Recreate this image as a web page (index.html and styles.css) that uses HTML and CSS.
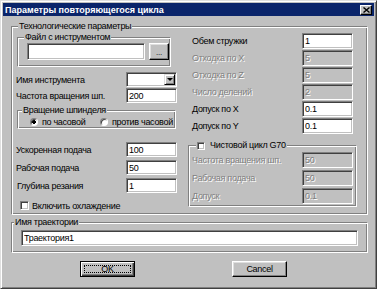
FILE: index.html
```html
<!DOCTYPE html>
<html lang="ru">
<head>
    <meta charset="UTF-8">
    <title>Параметры повторяющегося цикла</title>
    <link rel="stylesheet" href="styles.css">
</head>
<body>
    <div class="window">
        <div class="titlebar">
            <span class="title">Параметры повторяющегося цикла</span>
            <button class="close-btn" type="button">
                <svg width="7" height="6" viewBox="0 0 7 6"><path d="M0.5 0.5 L6.5 5.5 M6.5 0.5 L0.5 5.5" stroke="#000" stroke-width="1.4"/></svg>
            </button>
        </div>

        <div class="dialog-body">
            <fieldset class="group group-main">
                <legend>Технологические параметры</legend>
                <div class="cols">
                    <div class="col-left">
                        <fieldset class="group group-file">
                            <legend>Файл с инструментом</legend>
                            <div class="file-row">
                                <input class="edit file-edit" type="text" value="">
                                <button class="btn btn-browse" type="button">...</button>
                            </div>
                        </fieldset>

                        <div class="row row-tool">
                            <span class="label">Имя инструмента</span>
                            <div class="combo">
                                <span class="combo-text"></span>
                                <span class="combo-btn"><span class="arrow"></span></span>
                            </div>
                        </div>
                        <div class="row row-speed">
                            <span class="label">Частота вращения шп.</span>
                            <input class="edit" type="text" value="200">
                        </div>

                        <fieldset class="group group-spin">
                            <legend>Вращение шпинделя</legend>
                            <div class="radios">
                                <label class="option option-first"><input type="radio" name="spin" checked>по часовой</label>
                                <label class="option"><input type="radio" name="spin">против часовой</label>
                            </div>
                        </fieldset>

                        <div class="feeds">
                            <div class="row">
                                <span class="label">Ускоренная подача</span>
                                <input class="edit" type="text" value="100">
                            </div>
                            <div class="row">
                                <span class="label">Рабочая подача</span>
                                <input class="edit" type="text" value="50">
                            </div>
                            <div class="row">
                                <span class="label label-indent">Глубина резания</span>
                                <input class="edit" type="text" value="1">
                            </div>
                        </div>

                        <label class="option option-cool"><input type="checkbox">Включить охлаждение</label>
                    </div>

                    <div class="col-right">
                        <div class="params">
                            <div class="row">
                                <span class="label">Обем стружки</span>
                                <input class="edit" type="text" value="1">
                            </div>
                            <div class="row">
                                <span class="label disabled">Отходка по X</span>
                                <input class="edit" type="text" value="5" disabled>
                            </div>
                            <div class="row">
                                <span class="label disabled">Отходка по Z</span>
                                <input class="edit" type="text" value="5" disabled>
                            </div>
                            <div class="row">
                                <span class="label disabled">Число делений</span>
                                <input class="edit" type="text" value="2" disabled>
                            </div>
                            <div class="row">
                                <span class="label">Допуск по X</span>
                                <input class="edit" type="text" value="0.1">
                            </div>
                            <div class="row">
                                <span class="label">Допуск по Y</span>
                                <input class="edit" type="text" value="0.1">
                            </div>
                        </div>

                        <fieldset class="group group-finish">
                            <legend><label class="option"><input type="checkbox">Чистовой цикл G70</label></legend>
                            <div class="finish-rows">
                                <div class="row">
                                    <span class="label disabled">Частота вращения шп.</span>
                                    <input class="edit" type="text" value="50" disabled>
                                </div>
                                <div class="row">
                                    <span class="label disabled">Рабочая подача</span>
                                    <input class="edit" type="text" value="50" disabled>
                                </div>
                                <div class="row">
                                    <span class="label disabled">Допуск</span>
                                    <input class="edit" type="text" value="0.1" disabled>
                                </div>
                            </div>
                        </fieldset>
                    </div>
                </div>
            </fieldset>

            <fieldset class="group group-path">
                <legend>Имя траектории</legend>
                <input class="edit path-edit" type="text" value="Траектория1">
            </fieldset>

            <div class="buttons">
                <button class="btn btn-default" type="button"><span class="focus">OK</span></button>
                <button class="btn" type="button">Cancel</button>
            </div>
        </div>
    </div>
</body>
</html>
```

FILE: styles.css
```css
body {
    margin: 0;
    background-color: #c0c0c0;
    font-family: "Liberation Sans", Arial, sans-serif;
    font-size: 9px;
    letter-spacing: -0.3px;
    color: #000;
}

.window {
    box-sizing: border-box;
    width: 377px;
    height: 289px;
    padding: 2px;
    border: 1px solid;
    border-color: #dfdfdf #404040 #404040 #dfdfdf;
    box-shadow: inset 1px 1px 0 #fff, inset -1px -1px 0 #808080;
    background-color: #c0c0c0;
}

/* title bar */
.titlebar {
    display: flex;
    align-items: center;
    justify-content: space-between;
    height: 13px;
    padding: 0 2px 0 2px;
    background-color: #0a246a;
    color: #fff;
    font-weight: bold;
    letter-spacing: 0;
}

.close-btn {
    display: flex;
    align-items: center;
    justify-content: center;
    box-sizing: border-box;
    width: 12px;
    height: 10px;
    padding: 0;
    border: 1px solid;
    border-color: #fff #000 #000 #fff;
    box-shadow: inset -1px -1px 0 #808080;
    background-color: #c0c0c0;
}

/* etched group boxes */
.group {
    box-sizing: border-box;
    min-width: 0;
    margin: 0;
    padding: 0;
    border: 1px solid;
    border-color: #808080 #fff #fff #808080;
    box-shadow: inset 1px 1px 0 #fff, inset -1px -1px 0 #808080;
}

.group legend {
    height: 11px;
    line-height: 11px;
    padding: 0 1px;
    background-color: #c0c0c0;
}

.group-main {
    width: 357px;
    margin: 5px 0 0 8px;
    padding: 0 9px 4px 4px;
}

.group-main > legend {
    margin-left: 2px;
}

.cols {
    display: flex;
    gap: 11px;
}

.col-left {
    width: 161px;
}

.col-right {
    width: 170px;
}

.group-file {
    width: 154px;
    margin-left: 1px;
    padding: 0 1px 6px 9px;
}

.group-file legend {
    margin-left: -3px;
}

.file-row {
    display: flex;
    gap: 4px;
}

/* rows with label + field */
.row {
    display: flex;
    align-items: center;
    justify-content: space-between;
    height: 15px;
}

.label {
    white-space: nowrap;
}

.label-indent {
    padding-left: 1px;
}

.label.disabled {
    color: #808080;
    text-shadow: 1px 1px 0 #fff;
}

.edit {
    box-sizing: border-box;
    width: 51px;
    height: 15px;
    margin: 0;
    padding: 0 2px;
    border: 1px solid;
    border-color: #808080 #fff #fff #808080;
    box-shadow: inset 1px 1px 0 #404040, inset -1px -1px 0 #c0c0c0;
    background-color: #fff;
    font: inherit;
    letter-spacing: inherit;
    color: #000;
    outline: none;
}

.edit:disabled {
    background-color: #c0c0c0;
    color: #808080;
    -webkit-text-fill-color: #808080;
    text-shadow: 1px 1px 0 #fff;
}

.file-edit {
    width: 118px;
    height: 17px;
}

.row-tool {
    margin-top: 5px;
}

.row-speed {
    margin-top: 1px;
}

.combo {
    box-sizing: border-box;
    display: flex;
    justify-content: flex-end;
    width: 51px;
    height: 15px;
    padding: 2px;
    border: 1px solid;
    border-color: #808080 #fff #fff #808080;
    box-shadow: inset 1px 1px 0 #404040, inset -1px -1px 0 #c0c0c0;
    background-color: #fff;
}

.combo-btn {
    display: flex;
    align-items: center;
    justify-content: center;
    box-sizing: border-box;
    width: 11px;
    height: 11px;
    margin: -1px -1px 0 0;
    border: 1px solid;
    border-color: #dfdfdf #000 #000 #dfdfdf;
    box-shadow: inset 1px 1px 0 #fff, inset -1px -1px 0 #808080;
    background-color: #c0c0c0;
}

.arrow {
    width: 0;
    height: 0;
    border-left: 3px solid transparent;
    border-right: 3px solid transparent;
    border-top: 3px solid #000;
}

/* buttons */
.btn {
    box-sizing: border-box;
    width: 55px;
    height: 16px;
    padding: 0;
    border: 1px solid;
    border-color: #fff #000 #000 #fff;
    box-shadow: inset -1px -1px 0 #808080, inset 1px 1px 0 #dfdfdf;
    background-color: #c0c0c0;
    font: inherit;
    letter-spacing: inherit;
    color: #000;
}

.btn-browse {
    width: 20px;
    height: 17px;
    font-size: 8px;
    padding-top: 2px;
}

.btn-default {
    display: flex;
    padding: 3px;
    border-color: #000;
    box-shadow: inset 1px 1px 0 #fff, inset -1px -1px 0 #404040, inset -2px -2px 0 #808080;
}

.focus {
    display: flex;
    align-items: center;
    justify-content: center;
    flex: 1;
    border: 1px dotted #000;
}

/* radios and checkboxes */
.option {
    display: flex;
    align-items: center;
    white-space: nowrap;
}

.option input {
    appearance: none;
    box-sizing: border-box;
    width: 9px;
    height: 9px;
    margin: 0 4px 0 0;
    border: 1px solid;
    border-color: #808080 #fff #fff #808080;
    box-shadow: inset 1px 1px 0 #404040, inset -1px -1px 0 #c0c0c0;
    background-color: #fff;
}

.option input[type="radio"] {
    width: 8px;
    height: 8px;
    border-radius: 50%;
    box-shadow: inset 1px 1px 0 #404040;
}

.option input[type="radio"]:checked {
    background: radial-gradient(circle, #000 0 1.6px, #fff 1.8px);
}

.group-spin {
    width: 159px;
    margin-top: 2px;
    margin-left: 1px;
    padding: 1px 0;
}

.group-spin legend {
    margin-left: 4px;
}

.radios {
    display: flex;
    align-items: center;
    height: 10px;
    padding-left: 12px;
}

.option-first {
    width: 70px;
}

.feeds {
    display: flex;
    flex-direction: column;
    gap: 3px;
    margin-top: 13px;
}

.option-cool {
    height: 9px;
    margin-top: 8px;
    padding-left: 4px;
}

.option-cool input {
    margin-right: 3px;
}

/* right column */
.params {
    display: flex;
    flex-direction: column;
    gap: 1px;
    margin-top: 1px;
    padding: 0 5px 0 4px;
}

.params .row,
.finish-rows .row {
    height: 16px;
}

.params .edit,
.finish-rows .edit {
    height: 16px;
}

.group-finish {
    width: 169px;
    margin-top: 6px;
    padding: 1px 3px 2px 3px;
}

.group-finish legend {
    margin-left: 4px;
}

.group-finish legend input {
    width: 8px;
    height: 8px;
    margin-right: 5px;
}

.finish-rows {
    display: flex;
    flex-direction: column;
    gap: 2px;
}

/* bottom part */
.group-path {
    width: 357px;
    margin: 2px 0 0 8px;
    padding: 2px 9px 6px 9px;
}

.group-path legend {
    margin-left: -7px;
}

.path-edit {
    width: 337px;
    height: 16px;
}

.buttons {
    display: flex;
    gap: 97px;
    margin-top: 8px;
    padding-left: 77px;
}
```
